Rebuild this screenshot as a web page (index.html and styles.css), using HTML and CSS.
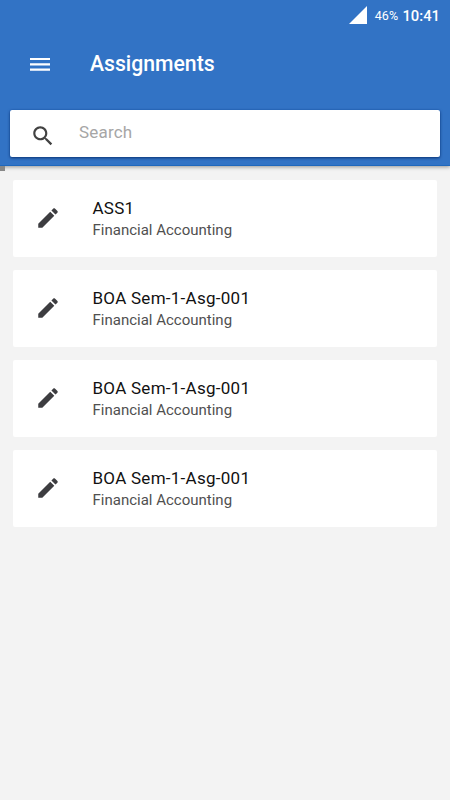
FILE: index.html
```
<!DOCTYPE html>
<html lang="en">
<head>
  <meta charset="UTF-8">
  <meta name="viewport" content="width=device-width, initial-scale=1.0">
  <title>Assignments</title>
  <link rel="stylesheet" href="styles.css">
</head>
<body>
  <svg width="0" height="0" class="defs">
    <symbol id="edit" viewBox="0 0 24 24">
      <path d="M3 17.25V21h3.75L17.81 9.94l-3.75-3.75L3 17.25zM20.71 7.04c.39-.39.39-1.02 0-1.41l-2.34-2.34c-.39-.39-1.02-.39-1.41 0l-1.83 1.83 3.75 3.75 1.83-1.83z"/>
    </symbol>
  </svg>

  <header class="header">
    <div class="status-bar">
      <svg class="signal" viewBox="0 0 18 18"><path d="M0 18L18 0V18z"/></svg>
      <span class="battery">46%</span>
      <span class="clock">10:41</span>
    </div>
    <div class="toolbar">
      <svg class="menu" viewBox="0 0 20 13"><path d="M0 0h20v2H0zM0 5.3h20v2.2H0zM0 10.6h20v2.2H0z"/></svg>
      <h1>Assignments</h1>
    </div>
    <div class="search">
      <svg class="search-icon" viewBox="0 0 24 24"><path d="M15.5 14h-.79l-.28-.27C15.41 12.59 16 11.11 16 9.5 16 5.91 13.09 3 9.5 3S3 5.91 3 9.5 5.91 16 9.5 16c1.61 0 3.09-.59 4.23-1.57l.27.28v.79l5 4.99L20.49 19l-4.99-5zm-6 0C7.01 14 5 11.99 5 9.5S7.01 5 9.5 5 14 7.01 14 9.5 11.99 14 9.5 14z"/></svg>
      <span>Search</span>
    </div>
  </header>
  <div class="progress"></div>

  <main class="list">
    <div class="card">
      <svg class="edit-icon"><use href="#edit"/></svg>
      <div>
        <h2>ASS1</h2>
        <p>Financial Accounting</p>
      </div>
    </div>
    <div class="card">
      <svg class="edit-icon"><use href="#edit"/></svg>
      <div>
        <h2>BOA Sem-1-Asg-001</h2>
        <p>Financial Accounting</p>
      </div>
    </div>
    <div class="card">
      <svg class="edit-icon"><use href="#edit"/></svg>
      <div>
        <h2>BOA Sem-1-Asg-001</h2>
        <p>Financial Accounting</p>
      </div>
    </div>
    <div class="card">
      <svg class="edit-icon"><use href="#edit"/></svg>
      <div>
        <h2>BOA Sem-1-Asg-001</h2>
        <p>Financial Accounting</p>
      </div>
    </div>
  </main>
</body>
</html>
```
FILE: styles.css
```
* {
  box-sizing: border-box;
}
body {
  margin: 0;
  min-height: 100vh;
  background-color: #f3f3f3;
  font-family: Roboto, sans-serif;
}
h1, h2, p {
  margin: 0;
}
.defs {
  display: block;
}
.header {
  height: 166px;
  background-color: #3273c5;
  border-bottom: 1px solid #1f68bd;
  box-shadow: 0 1px 4px rgba(0,0,0,0.4);
  color: white;
}
.status-bar {
  display: flex;
  align-items: center;
  justify-content: flex-end;
  height: 31px;
  padding-right: 10px;
}
.signal {
  width: 18px;
  height: 18px;
  margin: -1px 8px 0 0;
  fill: white;
}
.battery {
  margin-right: 4px;
  font-size: 12.5px;
  letter-spacing: 0.2px;
}
.clock {
  font-size: 14.8px;
  font-weight: 500;
}
.toolbar {
  display: flex;
  align-items: center;
  height: 66px;
  padding-left: 30px;
}
.menu {
  width: 20px;
  height: 13px;
  margin: 1px 40px 0 0;
  fill: white;
}
.toolbar h1 {
  margin-top: -2px;
  font-size: 21.2px;
  font-weight: 500;
}
.search {
  display: flex;
  align-items: center;
  height: 47px;
  margin: 13px 10px 0;
  padding-left: 20px;
  background-color: white;
  border-radius: 2px;
  box-shadow: 0 0 1px #0048a8, 0 1px 3px rgba(0,30,80,0.75);
  color: #a6a6a6;
}
.search-icon {
  width: 26px;
  height: 26px;
  margin: 5px 23px 0 0;
  fill: #424242;
}
.search span {
  margin-top: -4px;
  font-size: 17px;
  letter-spacing: 0.2px;
}
.progress {
  width: 5px;
  height: 5px;
  position: relative;
  background-color: #888;
}
.list {
  display: flex;
  flex-direction: column;
  gap: 13px;
  padding: 9px 13px 9px 12.5px;
}
.card {
  display: flex;
  align-items: center;
  height: 77px;
  padding-left: 22px;
  background-color: white;
  border-radius: 2px;
}
.edit-icon {
  width: 26px;
  height: 26px;
  margin: -1px 32px 0 0;
  fill: #3d3d40;
}
.card h2 {
  font-size: 17px;
  font-weight: 400;
  line-height: 22px;
  letter-spacing: 0.27px;
  color: #111;
}
.card p {
  font-size: 15px;
  line-height: 22px;
  color: #505050;
}
```
